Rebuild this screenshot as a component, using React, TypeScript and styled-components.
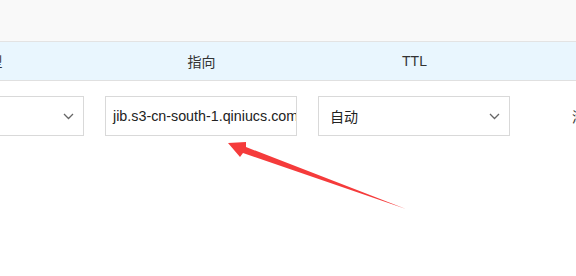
import React from "react";
import styled, { createGlobalStyle } from "styled-components";

const GlobalStyle = createGlobalStyle`
  html, body {
    margin: 0;
    padding: 0;
    background: #ffffff;
  }
  body {
    font-family: "Liberation Sans", Arial, "Noto Sans CJK SC", sans-serif;
    color: #333333;
  }
`;

const Page = styled.div`
  position: relative;
  width: 576px;
  height: 276px;
  overflow: hidden;
  background: #ffffff;
`;

const TopBar = styled.div`
  height: 41px;
  background: #f9f9f9;
  border-bottom: 1px solid #e3e3e3;
`;

const Table = styled.div`
  margin-left: -118px;
`;

const HeaderRow = styled.div`
  display: grid;
  grid-template-columns: 213px 213px 213px 200px;
  height: 38px;
  background: #e9f6fe;
  border-bottom: 1px solid #e0e0e0;
`;

const HeaderCell = styled.div`
  display: flex;
  align-items: center;
  justify-content: center;
  font-size: 14px;
  color: #333333;
`;

const BodyRow = styled.div`
  display: grid;
  grid-template-columns: 213px 213px 213px 200px;
  padding-top: 15px;
`;

const Cell = styled.div<{ $pad?: number }>`
  display: flex;
  align-items: center;
  padding: 0 10px;
  padding-left: ${(p) => (p.$pad ?? 10)}px;
  height: 40px;
  font-size: 14px;
`;

const Field = styled.div`
  box-sizing: border-box;
  width: 192px;
  height: 40px;
  border: 1px solid #d9d9d9;
  background: #ffffff;
  display: flex;
  align-items: center;
  justify-content: space-between;
  padding: 0 9px 0 11px;
  font-size: 14px;
  color: #222222;
  overflow: hidden;
  white-space: nowrap;
`;

const InputField = styled(Field)`
  padding: 0 0 0 7px;
  justify-content: flex-start;
  font-size: 14.3px;
`;

const Chevron = () => (
  <svg width="11" height="7" viewBox="0 0 11 7">
    <path d="M1 1 L5.5 5.5 L10 1" fill="none" stroke="#666" strokeWidth="1.3" />
  </svg>
);

const ActionText = styled.span`
  color: #333333;
  font-size: 14px;
`;

const Overlay = styled.svg`
  position: absolute;
  left: 0;
  top: 0;
  pointer-events: none;
`;

export default function App() {
  return (
    <>
      <GlobalStyle />
      <Page>
        <TopBar />
        <Table>
          <HeaderRow>
            <HeaderCell>类型</HeaderCell>
            <HeaderCell>指向</HeaderCell>
            <HeaderCell>TTL</HeaderCell>
            <HeaderCell />
          </HeaderRow>
          <BodyRow>
            <Cell>
              <Field>
                <span>CNAME</span>
                <Chevron />
              </Field>
            </Cell>
            <Cell>
              <InputField>jib.s3-cn-south-1.qiniucs.com</InputField>
            </Cell>
            <Cell>
              <Field>
                <span>自动</span>
                <Chevron />
              </Field>
            </Cell>
            <Cell $pad={51}>
              <ActionText>添加</ActionText>
            </Cell>
          </BodyRow>
        </Table>
        <Overlay width="576" height="276" viewBox="0 0 576 276">
          <polygon
            points="228,143 246,142 246,147 406,209 243,153 240,157"
            fill="#f53b3b"
          />
        </Overlay>
      </Page>
    </>
  );
}
